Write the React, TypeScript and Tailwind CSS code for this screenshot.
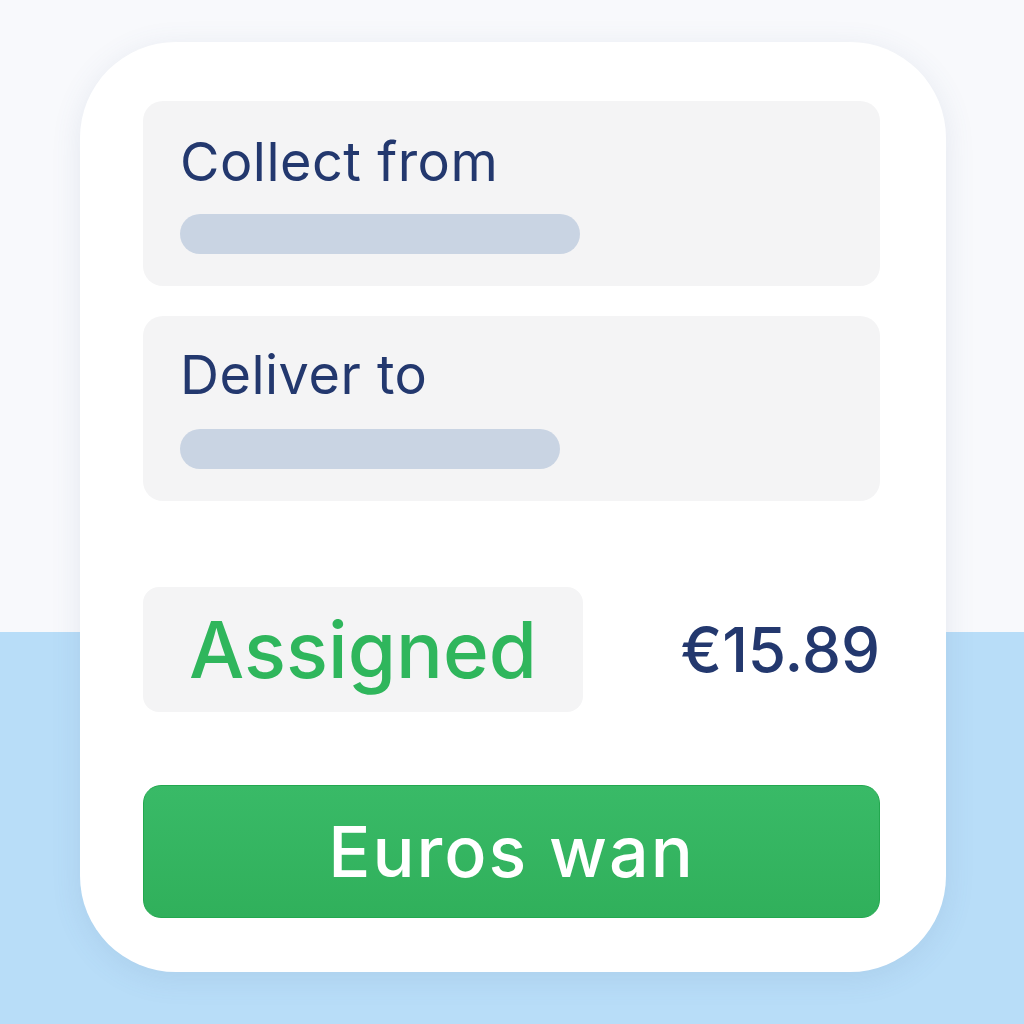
import React from 'react';

const font = { fontFamily: 'Inter, "Noto Sans", sans-serif' };

function AddressBlock({ label, barWidth, padTop, gap }: { label: string; barWidth: string; padTop: string; gap: string }) {
  return (
    <div className={`h-[185px] rounded-[20px] bg-[#f4f4f5] pl-[37px] ${padTop}`}>
      <div className="text-[54px] leading-none text-[#23386e] tracking-[0.5px]">{label}</div>
      <div className={`h-[40px] rounded-full bg-[#c9d4e3] ${barWidth} ${gap}`} />
    </div>
  );
}

export default function App() {
  return (
    <div
      className="w-[1024px] h-[1024px] pt-[42px] pl-[80px] bg-[linear-gradient(to_bottom,#f8f9fc_632px,#b8ddf8_632px)]"
      style={font}
    >
      <div className="w-[866px] h-[930px] rounded-[96px] bg-white shadow-[0_6px_30px_rgba(80,110,150,0.12)] pl-[63px] pr-[66px] pt-[59px]">
        <div className="flex flex-col gap-[30px]">
          <AddressBlock label="Collect from" barWidth="w-[400px]" padTop="pt-[34px]" gap="mt-[25px]" />
          <AddressBlock label="Deliver to" barWidth="w-[380px]" padTop="pt-[32px]" gap="mt-[27px]" />
        </div>

        <div className="mt-[86px] flex items-center justify-between">
          <div className="w-[440px] h-[125px] rounded-[16px] bg-[#f4f4f5] flex items-center justify-center">
            <span className="text-[78px] leading-none font-medium text-[#2fb65c]">Assigned</span>
          </div>
          <span className="text-[62px] leading-none font-medium text-[#23386e]">€15.89</span>
        </div>

        <button className="mt-[73px] w-full h-[133px] rounded-[18px] bg-[linear-gradient(to_bottom,#39ba67,#30b05b)] border border-[#23a84f] flex items-center justify-center">
          <span className="text-[70px] leading-none font-medium text-white tracking-[2px]">Euros wan</span>
        </button>
      </div>
    </div>
  );
}
